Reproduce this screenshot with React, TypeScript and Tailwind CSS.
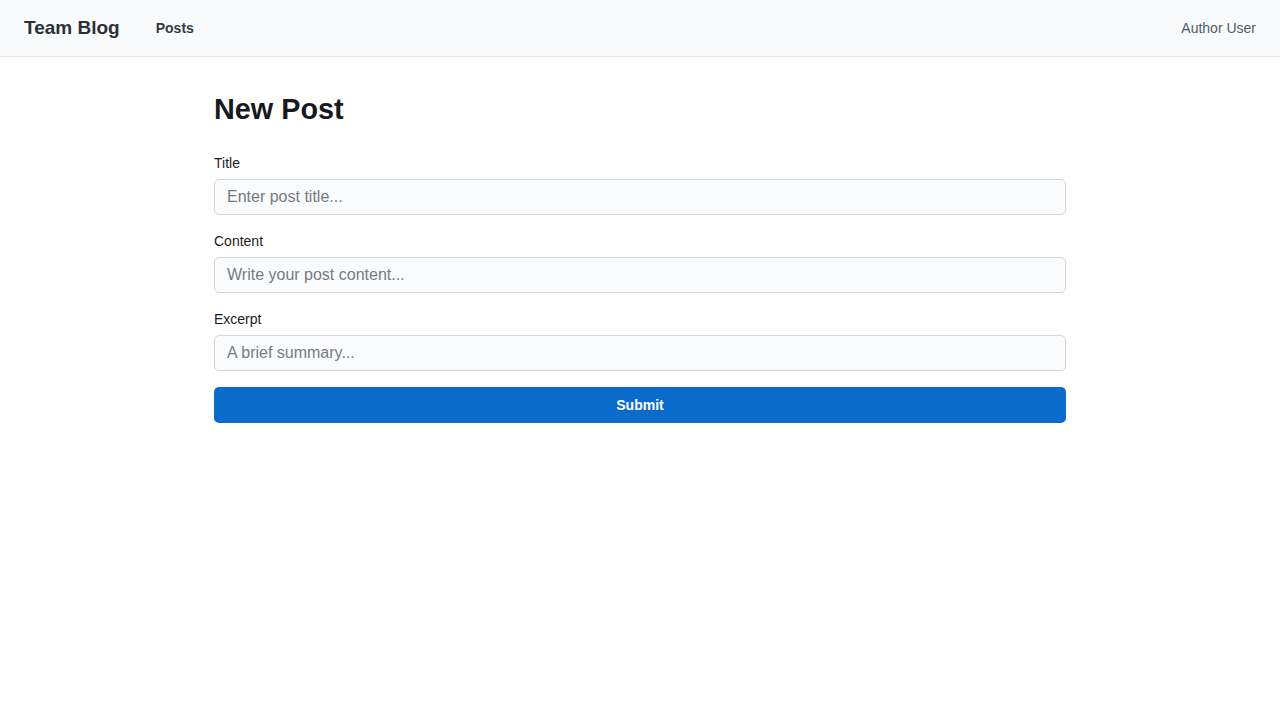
export default function App() {
  const fields = [
    { label: "Title", placeholder: "Enter post title..." },
    { label: "Content", placeholder: "Write your post content..." },
    { label: "Excerpt", placeholder: "A brief summary..." },
  ];

  return (
    <div className="min-h-screen bg-white font-['Liberation_Sans',Arial,sans-serif] text-[#1f2328]">
      <header className="flex h-[57px] items-center justify-between border-b border-[#e1e4e8] bg-[#f8fafc] px-6">
        <div className="flex items-center gap-9">
          <span className="text-[19px] font-bold text-[#2d3136]">Team Blog</span>
          <a className="text-sm font-bold text-[#363a40]">Posts</a>
        </div>
        <span className="text-sm text-[#555a60]">Author User</span>
      </header>

      <main className="mx-auto w-[852px] pt-[34px]">
        <h1 className="mb-[26px] text-[28.8px] font-bold leading-9 text-[#16191d]">New Post</h1>

        <form className="flex flex-col gap-4" onSubmit={(e) => e.preventDefault()}>
          {fields.map((f) => (
            <div key={f.label} className="flex flex-col">
              <label className="mb-1.5 text-sm leading-5 text-[#1a1d21]">{f.label}</label>
              <input
                type="text"
                placeholder={f.placeholder}
                className="h-9 rounded-[5px] border border-[#d3d7dc] bg-[#fafbfc] px-3 text-base text-[#1f2328] outline-none placeholder:text-[#767b82]"
              />
            </div>
          ))}
          <button
            type="submit"
            className="h-9 rounded-[5px] bg-[#0a6bcb] text-sm font-bold text-white"
          >
            Submit
          </button>
        </form>
      </main>
    </div>
  );
}
